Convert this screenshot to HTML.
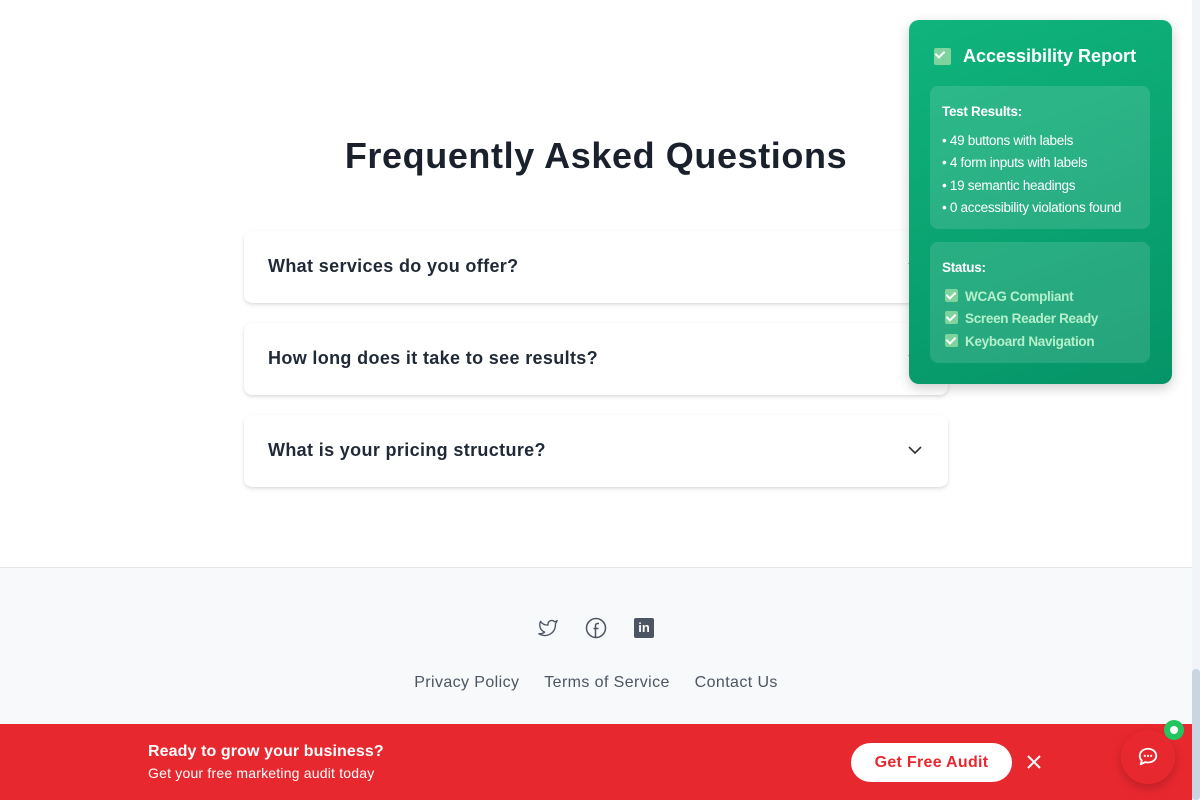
<!DOCTYPE html>
<html><head><meta charset="utf-8"><style>
*{box-sizing:border-box;margin:0;padding:0}
body{width:1200px;height:800px;overflow:hidden;background:#fff;font-family:"Liberation Sans",sans-serif;position:relative;color:#1a202c}
h1{position:absolute;top:135px;left:0;width:1192px;text-align:center;font-size:36px;font-weight:700;color:#1a202c;letter-spacing:0.6px}
.card{position:absolute;left:244px;width:704px;height:72px;background:#fff;border-radius:8px;box-shadow:0 2px 5px rgba(0,0,0,.1),0 1px 2px rgba(0,0,0,.06)}
.card span{position:absolute;left:24px;top:25px;font-size:18px;font-weight:700;color:#1f2937;letter-spacing:0.35px}
.card svg{position:absolute;right:26px;top:30px}
.footer{position:absolute;top:567px;left:0;width:1192px;height:233px;background:#f8f9fb;border-top:1px solid #e5e7eb}
.links{position:absolute;top:674px;left:0;width:1192px;text-align:center;font-size:16px;color:#4b5563;letter-spacing:0.4px}
.links a{margin:0 10px;color:#4b5563;text-decoration:none}
.bar{position:absolute;top:724px;left:0;width:1192px;height:76px;background:#e8282f;color:#fff}
.bar b{position:absolute;left:148px;top:19px;font-size:16px;letter-spacing:0.1px}
.bar small{position:absolute;left:148px;top:41px;font-size:14px;letter-spacing:0.2px}
.btn{position:absolute;left:851px;top:19px;width:161px;height:39px;background:#fff;border-radius:20px;color:#e8282f;font-weight:700;font-size:16px;text-align:center;line-height:39px;letter-spacing:0.3px}
.chat{position:absolute;left:1121px;top:730px;width:54px;height:54px;border-radius:50%;background:#e8282f;box-shadow:0 4px 10px rgba(0,0,0,.2)}
.dot{position:absolute;left:1164px;top:720px;width:20px;height:20px;border-radius:50%;background:#22c55e}
.dot:after{content:"";position:absolute;left:6px;top:6px;width:8px;height:8px;border-radius:50%;background:#fff}
.sb{position:absolute;left:1192px;top:0;width:8px;height:800px;background:#f1f5f9}
.sb div{position:absolute;top:669px;left:0;width:8px;height:131px;background:#cbd5e1;border-radius:4px}
.rep{position:absolute;left:909px;top:20px;width:263px;height:364px;border-radius:10px;background:linear-gradient(160deg,#10b47c,#059467);box-shadow:0 4px 12px rgba(0,0,0,.2);color:#fff}
.rep h2{position:absolute;left:54px;top:26px;font-size:18px;font-weight:700}
.box{position:absolute;left:21px;width:220px;background:rgba(255,255,255,.13);border-radius:8px;font-size:13.5px;padding:15px 12px}
.box p{line-height:22.5px;white-space:nowrap;letter-spacing:-0.3px}
.ck{display:inline-block;width:13px;height:13px;background:#7ed49c;border-radius:2px;vertical-align:-1px;margin-right:7px;position:relative}
.ck:after{content:"";position:absolute;left:3px;top:1px;width:4px;height:7px;border:solid #fff;border-width:0 2px 2px 0;transform:rotate(45deg)}
.st{color:#b5f0cc;font-weight:700;padding-left:3px}
</style></head><body>
<h1>Frequently Asked Questions</h1>
<div class="card" style="top:231px"><span>What services do you offer?</span><svg width="14" height="10" viewBox="0 0 14 10"><path d="M1 2l6 6 6-6" fill="none" stroke="#333" stroke-width="1.6"/></svg></div>
<div class="card" style="top:323px"><span>How long does it take to see results?</span><svg width="14" height="10" viewBox="0 0 14 10"><path d="M1 2l6 6 6-6" fill="none" stroke="#333" stroke-width="1.6"/></svg></div>
<div class="card" style="top:415px"><span>What is your pricing structure?</span><svg width="14" height="10" viewBox="0 0 14 10"><path d="M1 2l6 6 6-6" fill="none" stroke="#333" stroke-width="1.6"/></svg></div>
<div class="footer"></div>
<svg style="position:absolute;left:537px;top:618px" width="22" height="20" viewBox="0 0 24 24"><path d="M23 3a10.9 10.9 0 0 1-3.140 1.530 4.480 4.480 0 0 0-7.860 3v1A10.660 10.660 0 0 1 3 4s-4 9 5 13a11.640 11.640 0 0 1-7 2c9 5 20 0 20-11.500a4.500 4.500 0 0 0-.080-.830A7.720 7.720 0 0 0 23 3z" fill="none" stroke="#4b5563" stroke-width="1.600" stroke-linejoin="round"/></svg>
<svg style="position:absolute;left:585px;top:617px" width="22" height="22" viewBox="0 0 22 22"><circle cx="11" cy="11" r="9.5" fill="none" stroke="#4b5563" stroke-width="1.5"/><path d="M14 6.500h-1.500a2 2 0 0 0-2 2V20.500M8.500 11.500h5" fill="none" stroke="#4b5563" stroke-width="1.5"/></svg>
<div style="position:absolute;left:634px;top:618px;width:20px;height:20px;background:#4b5563;border-radius:2px;color:#fff;font-size:13px;font-weight:700;text-align:center;line-height:20px">in</div>
<div class="links"><a>Privacy Policy</a> <a>Terms of Service</a> <a>Contact Us</a></div>
<div class="bar"><b>Ready to grow your business?</b><small>Get your free marketing audit today</small><div class="btn">Get Free Audit</div>
<svg style="position:absolute;left:1027px;top:31px" width="14" height="14" viewBox="0 0 14 14"><path d="M1 1l12 12M13 1L1 13" stroke="#fff" stroke-width="2"/></svg></div>
<div class="chat"><svg style="position:absolute;left:16px;top:16px" width="22" height="22" viewBox="0 0 24 24"><path d="M12 3c5 0 9 3.400 9 7.600S17 18 12 18c-1 0-2-.100-3-.400L4 20l1.300-4C3.800 14.600 3 12.700 3 10.600 3 6.400 7 3 12 3z" fill="none" stroke="#fff" stroke-width="2" stroke-linejoin="round"/><circle cx="8.500" cy="10.800" r="1.200" fill="#fff"/><circle cx="12" cy="10.800" r="1.200" fill="#fff"/><circle cx="15.500" cy="10.800" r="1.200" fill="#fff"/></svg></div>
<div class="dot"></div>
<div class="sb"><div></div></div>
<div class="rep">
<span class="ck" style="position:absolute;left:25px;top:28px;width:17px;height:17px"></span>
<h2>Accessibility Report</h2>
<div class="box" style="top:66px;height:143px"><p style="font-weight:700;margin-bottom:6px">Test Results:</p><p>• 49 buttons with labels<br>• 4 form inputs with labels<br>• 19 semantic headings<br>• 0 accessibility violations found</p></div>
<div class="box" style="top:222px;height:121px"><p style="font-weight:700;margin-bottom:6px">Status:</p><p class="st"><span class="ck"></span>WCAG Compliant<br><span class="ck"></span>Screen Reader Ready<br><span class="ck"></span>Keyboard Navigation</p></div>
</div>
</body></html>
